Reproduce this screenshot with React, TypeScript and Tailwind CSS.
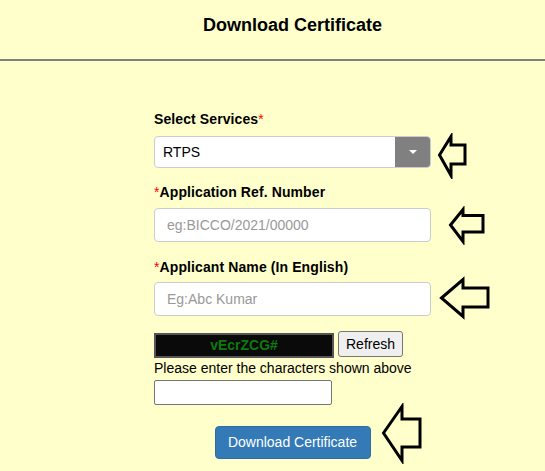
const font = { fontFamily: '"Liberation Sans", Arial, sans-serif' };

const arrows = [
  { x: 436, y: 133, w: 32, h: 46, pts: '3.5,22 15,3.5 15,12 29,12 29,31 15,31 15,42.5' },
  { x: 447, y: 206, w: 40, h: 39, pts: '3.5,19 16,3.5 16,9.5 36,9.5 36,26 16,26 16,35.5' },
  { x: 438, y: 276, w: 54, h: 44, pts: '3.5,22 25,3.5 25,12 50,12 50,31 25,31 25,40.5' },
  { x: 380, y: 403, w: 44, h: 61, pts: '3.5,30 22,3.5 22,16 40,16 40,44 22,44 22,57.5' },
];

const Arrow = ({ x, y, w, h, pts }: { x: number; y: number; w: number; h: number; pts: string }) => (
  <svg
    className="absolute pointer-events-none"
    style={{ left: x, top: y }}
    width={w}
    height={h}
    viewBox={`0 0 ${w} ${h}`}
  >
    <polygon points={pts} fill="none" stroke="#000" strokeWidth="3" strokeLinejoin="miter" />
  </svg>
);

const Req = () => <span className="text-[#ff0000] font-normal">*</span>;

export default function App() {
  return (
    <div className="relative min-h-[471px] bg-[#ffffcc] text-black" style={font}>
      {/* header */}
      <div className="h-[61px] border-b-2 border-[#808080]">
        <div className="ml-[154px] w-[277px] pt-[13px] text-center text-[18px] font-bold leading-[24px]">
          Download Certificate
        </div>
      </div>

      <div className="ml-[154px] w-[277px] pt-[49px]">
        <label className="block text-[14px] font-bold leading-[18px] tracking-[0.1px]">
          Select Services<Req />
        </label>
        <div className="mt-[8px] flex h-[32px] rounded-[4px] border border-[#cccccc] bg-white overflow-hidden">
          <div className="flex-1 pl-[8px] text-[14px] leading-[30px]">RTPS</div>
          <div className="flex w-[35px] items-center justify-center bg-[#808080]">
            <div className="h-0 w-0 border-x-[4px] border-t-[4px] border-x-transparent border-t-white" />
          </div>
        </div>

        <label className="mt-[15px] block text-[14px] font-bold leading-[18px] tracking-[0.1px]">
          <Req />Application Ref. Number
        </label>
        <input
          className="mt-[7px] block h-[34px] w-full rounded-[4px] border border-[#cccccc] bg-white px-[12px] text-[14px] outline-none placeholder:text-[#999999]"
          placeholder="eg:BICCO/2021/00000"
          style={font}
        />

        <label className="mt-[16px] block text-[14px] font-bold leading-[18px] tracking-[0.1px]">
          <Req />Applicant Name (In English)
        </label>
        <input
          className="mt-[6px] block h-[34px] w-full rounded-[4px] border border-[#cccccc] bg-white px-[12px] text-[14px] outline-none placeholder:text-[#999999]"
          placeholder="Eg:Abc Kumar"
          style={font}
        />

        <div className="mt-[15px] flex items-end gap-[4px]">
          <div className="mb-[-1px] h-[25px] w-[180px] border-2 border-[#555555] bg-[#0a0a0a] text-center text-[14px] font-bold leading-[21px] text-[#0b7a0b]">
            vEcrZCG#
          </div>
          <button
            className="h-[26px] w-[65px] rounded-[3px] border border-[#767676] bg-[#efefef] text-[14px] leading-[24px]"
            style={font}
          >
            Refresh
          </button>
        </div>
        <div className="mt-[3px] text-[14px] leading-[16px]">Please enter the characters shown above</div>
        <input
          className="mt-[4px] block h-[25px] w-[178px] rounded-[2px] border border-[#767676] bg-white px-[4px] text-[14px] outline-none"
          style={font}
        />

        <div className="mt-[21px] flex justify-center">
          <button
            className="h-[33px] w-[156px] rounded-[4px] border border-[#2e6da4] bg-[#337ab7] text-[14px] text-white"
            style={font}
          >
            Download Certificate
          </button>
        </div>
      </div>

      {arrows.map((a, i) => (
        <Arrow key={i} {...a} />
      ))}
    </div>
  );
}
